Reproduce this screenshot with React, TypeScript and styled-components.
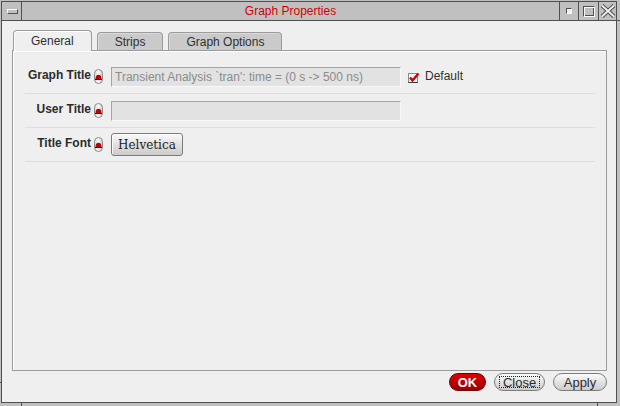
import React from "react";
import styled, { createGlobalStyle } from "styled-components";

const Global = createGlobalStyle`
  html, body { margin: 0; padding: 0; background: #c0c0c0; }
  body { font-family: "Liberation Sans", Arial, sans-serif; }
  * { box-sizing: border-box; }
`;

const Window = styled.div`
  position: relative;
  width: 620px;
  height: 406px;
  background: #c0c0c0;
  padding: 1px 3px 3px 1px;
  display: flex;
`;

const Notch = styled.span<{ $side: "bottom" | "left" | "right" }>`
  position: absolute;
  background: #505050;
  ${(p) =>
    p.$side === "bottom"
      ? "width: 1px; height: 3px; bottom: 0;"
      : p.$side === "left"
      ? "height: 1px; left: 0; width: 2px;"
      : "height: 1px; width: 3px; right: 0;"}
`;

const Frame = styled.div`
  flex: 1;
  border: 1px solid #505050;
  display: flex;
  flex-direction: column;
  min-width: 0;
`;

const TitleBar = styled.div`
  height: 19px;
  border-bottom: 1px solid #505050;
  background: #c0c0c0;
  display: flex;
  align-items: stretch;
`;

const MenuBtn = styled.div`
  width: 20px;
  border-right: 1px solid #505050;
  display: flex;
  align-items: center;
  justify-content: center;
`;

const MenuBar = styled.span`
  width: 11px;
  height: 5px;
  margin-top: 1px;
  margin-left: 1px;
  border: 1px solid;
  border-color: #fafafa #505050 #505050 #fafafa;
  background: #c0c0c0;
`;

const TitleText = styled.div`
  flex: 1;
  display: flex;
  align-items: center;
  justify-content: center;
  color: #d40000;
  font-size: 12px;
`;

const CtrlBtn = styled.div<{ $w: number }>`
  width: ${(p) => p.$w}px;
  border-left: 1px solid #505050;
  display: flex;
  align-items: center;
  justify-content: center;
`;

const MinBox = styled.span`
  width: 6px;
  height: 6px;
  border: 1px solid;
  border-color: #505050 #fafafa #fafafa #505050;
  background: #f0f0f0;
`;

const MaxBox = styled.span`
  width: 12px;
  height: 11px;
  border: 1px solid;
  border-color: #505050 #fafafa #fafafa #505050;
  box-shadow: inset 1px 1px 0 #fafafa, inset -1px -1px 0 #505050;
`;

const Content = styled.div`
  flex: 1;
  background: #efefef;
  padding: 9px 9px 0 10px;
  display: flex;
  flex-direction: column;
`;

const TabRow = styled.div`
  height: 20px;
  display: flex;
  align-items: flex-end;
  gap: 5px;
  padding-left: 1px;
  position: relative;
  z-index: 1;
`;

const Tab = styled.div<{ $active?: boolean }>`
  height: ${(p) => (p.$active ? "21px" : "18px")};
  margin-bottom: ${(p) => (p.$active ? "-1px" : "0")};
  padding: 0 17px;
  display: flex;
  align-items: center;
  font-size: 12px;
  color: #303030;
  background: ${(p) => (p.$active ? "#efefef" : "#cacaca")};
  border: 1px solid #9c9c9c;
  border-bottom: none;
  border-radius: 4px 4px 0 0;
  box-shadow: ${(p) => (p.$active ? "inset 1px 1px 0 #ffffff" : "inset 1px 1px 0 #dadada")};
  padding-top: ${(p) => (p.$active ? "0" : "1px")};
`;

const Panel = styled.div`
  flex: 1;
  border: 1px solid #9c9c9c;
  box-shadow: inset 1px 1px 0 #ffffff;
  padding-top: 9px;
  display: flex;
  flex-direction: column;
`;

const Row = styled.div`
  height: 34px;
  margin: 0 11px 0 12px;
  border-bottom: 1px solid #dedede;
  display: flex;
  align-items: center;
`;

const Label = styled.div`
  width: 66px;
  text-align: right;
  font-weight: bold;
  font-size: 12px;
  color: #2c2c2c;
  margin-top: -3px;
`;

const IndWrap = styled.span`
  margin-left: 3px;
  width: 9px;
  height: 15px;
  display: flex;
  margin-top: -1px;
`;

const Field = styled.div`
  margin-left: 8px;
  width: 290px;
  height: 20px;
  background: #e2e2e2;
  border: 1px solid;
  border-color: #a4a4a4 #f8f8f8 #f8f8f8 #a4a4a4;
  font-size: 12px;
  color: #8c8c8c;
  padding-left: 3px;
  display: flex;
  align-items: center;
  white-space: nowrap;
  overflow: hidden;
`;

const CheckWrap = styled.span`
  margin-left: 7px;
  width: 12px;
  height: 12px;
  display: flex;
`;

const CheckText = styled.span`
  margin-left: 5px;
  font-size: 12px;
  color: #303030;
  margin-top: -2px;
`;

const FontButton = styled.button`
  margin-left: 8px;
  height: 23px;
  padding: 0 6px;
  border: 1px solid #7c7c7c;
  border-radius: 3px;
  background: linear-gradient(#fafafa, #d8d8d8 70%, #cccccc);
  font-family: "DejaVu Serif", "Liberation Serif", serif;
  font-size: 12px;
  color: #222;
  display: flex;
  align-items: center;
  box-shadow: inset 1px 1px 0 #ffffff;
`;

const ButtonBar = styled.div`
  height: 31px;
  padding-top: 2px;
  display: flex;
  justify-content: flex-end;
  align-items: flex-start;
  gap: 8px;
`;

const PillButton = styled.button<{ $primary?: boolean; $w: number }>`
  width: ${(p) => p.$w}px;
  height: 18px;
  border-radius: 9px;
  border: 1px solid ${(p) => (p.$primary ? "#6a0000" : "#7c7c7c")};
  background: ${(p) =>
    p.$primary
      ? "linear-gradient(#e00000, #b80000 60%, #a00000)"
      : "linear-gradient(#fbfbfb, #dedede 60%, #cdcdcd)"};
  color: ${(p) => (p.$primary ? "#ffffff" : "#2c2c2c")};
  font-family: "Liberation Sans", Arial, sans-serif;
  font-weight: ${(p) => (p.$primary ? "bold" : "normal")};
  font-size: 13px;
  padding: 0;
  display: flex;
  align-items: center;
  justify-content: center;
`;

const Focus = styled.span`
  width: calc(100% - 8px);
  height: 12px;
  border: 1px dotted #222;
  display: flex;
  align-items: center;
  justify-content: center;
`;

const Indicator = () => (
  <IndWrap>
    <svg width="9" height="15" viewBox="0 0 9 15">
      <defs>
        <linearGradient id="pg" x1="0" y1="0" x2="1" y2="0">
          <stop offset="0" stopColor="#d8d8d8" />
          <stop offset="0.5" stopColor="#fafafa" />
          <stop offset="1" stopColor="#c8c8c8" />
        </linearGradient>
      </defs>
      <rect x="0.5" y="0.5" width="8" height="14" rx="4" fill="url(#pg)" stroke="#8a8a8a" />
      <path d="M1.5 10 A3 4.2 0 0 1 7.5 10 Z" fill="#c00000" />
      <line x1="1" y1="10.5" x2="8" y2="10.5" stroke="#5a0000" strokeWidth="1" />
    </svg>
  </IndWrap>
);

const Check = () => (
  <CheckWrap>
    <svg width="12" height="12" viewBox="0 0 12 12">
      <rect x="0.5" y="2.5" width="9" height="9" fill="#f6f6f6" stroke="#8a8a8a" />
      <line x1="0.5" y1="11.5" x2="10" y2="11.5" stroke="#3a3a3a" />
      <path d="M2 6.5 L4.5 9.5 L10.5 2.5" fill="none" stroke="#cc0000" strokeWidth="2.4" />
    </svg>
  </CheckWrap>
);

const CloseX = () => (
  <svg width="16" height="14" viewBox="0 0 16 14">
    <path d="M2 1.5 L14 12.5 M14 1.5 L2 12.5" stroke="#505050" strokeWidth="4" />
    <path d="M2 1.5 L14 12.5 M14 1.5 L2 12.5" stroke="#f2f2f2" strokeWidth="1.8" />
  </svg>
);

export default function App() {
  return (
    <>
      <Global />
      <Window>
        <Frame>
          <TitleBar>
            <MenuBtn>
              <MenuBar />
            </MenuBtn>
            <TitleText>Graph Properties</TitleText>
            <CtrlBtn $w={19}>
              <MinBox />
            </CtrlBtn>
            <CtrlBtn $w={20}>
              <MaxBox />
            </CtrlBtn>
            <CtrlBtn $w={18}>
              <CloseX />
            </CtrlBtn>
          </TitleBar>
          <Content>
            <TabRow>
              <Tab $active>General</Tab>
              <Tab>Strips</Tab>
              <Tab>Graph Options</Tab>
            </TabRow>
            <Panel>
              <Row>
                <Label>Graph Title</Label>
                <Indicator />
                <Field>Transient Analysis `tran': time = (0 s -&gt; 500 ns)</Field>
                <Check />
                <CheckText>Default</CheckText>
              </Row>
              <Row>
                <Label>User Title</Label>
                <Indicator />
                <Field />
              </Row>
              <Row>
                <Label>Title Font</Label>
                <Indicator />
                <FontButton>Helvetica</FontButton>
              </Row>
            </Panel>
            <ButtonBar>
              <PillButton $primary $w={37}>OK</PillButton>
              <PillButton $w={51}>
                <Focus>Close</Focus>
              </PillButton>
              <PillButton $w={54}>Apply</PillButton>
            </ButtonBar>
          </Content>
        </Frame>
        <Notch $side="bottom" style={{ left: 21 }} />
        <Notch $side="bottom" style={{ left: 597 }} />
        <Notch $side="left" style={{ top: 382 }} />
        <Notch $side="right" style={{ top: 20 }} />
      </Window>
    </>
  );
}
